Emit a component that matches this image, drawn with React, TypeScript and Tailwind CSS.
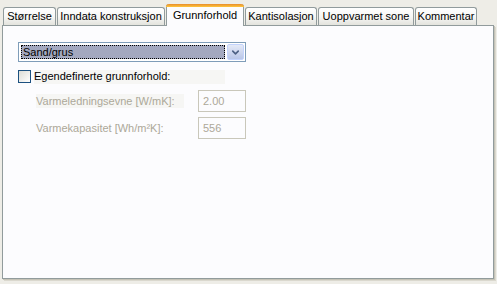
import { ChevronDown } from "lucide-react"

const tabs = [
  { label: "Størrelse", w: "w-[53px]" },
  { label: "Inndata konstruksjon", w: "w-[108px]" },
  { label: "Grunnforhold", w: "w-[78px]", active: true },
  { label: "Kantisolasjon", w: "w-[72px]" },
  { label: "Uoppvarmet sone", w: "w-[96px]" },
  { label: "Kommentar", w: "w-[62px]" },
]

function Tab({ label, w, active }: { label: string; w: string; active?: boolean }) {
  if (active) {
    return (
      <div
        className={`${w} relative z-10 -mb-px h-[22px] flex flex-col rounded-t-[3px] border-x border-[#919B9C] bg-[#FCFCFE]`}
      >
        <div className="h-[3px] rounded-t-[3px] bg-gradient-to-b from-[#E68B2C] to-[#FFC73C] -mx-px" />
        <div className="flex-1 flex items-center justify-center text-black pb-[2px]">{label}</div>
      </div>
    )
  }
  return (
    <div
      className={`${w} h-[18px] flex items-center justify-center rounded-t-[3px] border border-b-0 border-[#919B9C] bg-gradient-to-b from-white via-[#F7F7F5] to-[#E3E3DD] text-black`}
    >
      {label}
    </div>
  )
}

export default function App() {
  return (
    <div
      className="w-[497px] h-[284px] bg-[#EEEDE7] text-[11px] leading-none overflow-hidden"
      style={{ fontFamily: "Tahoma, 'Liberation Sans', Arial, sans-serif" }}
    >
      {/* tab strip */}
      <div className="h-[25px] flex items-end pl-[3px] gap-px">
        {tabs.map((t) => (
          <Tab key={t.label} {...t} />
        ))}
      </div>

      {/* page */}
      <div className="ml-[2px] w-[492px] h-[254px] border border-[#919B9C] bg-[#FCFCFE] shadow-[1px_1px_0_#C5C3B7,2px_2px_0_#DAD8CE] pl-[15px] pt-[16px]">
        {/* dropdown */}
        <div className="w-[228px] h-[20px] border border-[#7F9DB9] bg-white flex items-stretch">
          <div className="flex-1 m-[2px] bg-[#A3A8BF] outline-1 outline-dotted outline-black -outline-offset-1 flex items-center pl-[2px] text-black">
            Sand/grus
          </div>
          <div className="w-[17px] my-px mr-px rounded-[2px] bg-gradient-to-b from-[#E5EAF7] to-[#B9C6E8] border border-[#C3D3FD] flex items-center justify-center">
            <ChevronDown size={11} strokeWidth={3.5} className="text-[#4D6185]" />
          </div>
        </div>

        {/* checkbox */}
        <div className="mt-[8px] flex items-center h-[13px]">
          <div className="w-[13px] h-[13px] border border-[#1C5180] bg-gradient-to-br from-[#DCDCD6] to-white" />
          <div className="ml-[3px] w-[191px] h-[14px] bg-[#F6F6F4] flex items-center text-black">
            Egendefinerte grunnforhold:
          </div>
        </div>

        {/* disabled fields */}
        <div className="mt-[7px] ml-[18px] flex flex-col gap-[5px] text-[#ACA899]">
          <div className="flex items-center">
            <div className="w-[148px] h-[14px] bg-[#F6F6F4] flex items-center">Varmeledningsevne [W/mK]:</div>
            <div className="ml-[14px] w-[48px] h-[22px] border border-[#C9C7BA] bg-[#FCFCFE] flex items-center pl-[4px]">
              2.00
            </div>
          </div>
          <div className="flex items-center">
            <div className="w-[148px] h-[14px] flex items-center">Varmekapasitet [Wh/m²K]:</div>
            <div className="ml-[14px] w-[48px] h-[22px] border border-[#C9C7BA] bg-[#FCFCFE] flex items-center pl-[4px]">
              556
            </div>
          </div>
        </div>
      </div>
    </div>
  )
}
